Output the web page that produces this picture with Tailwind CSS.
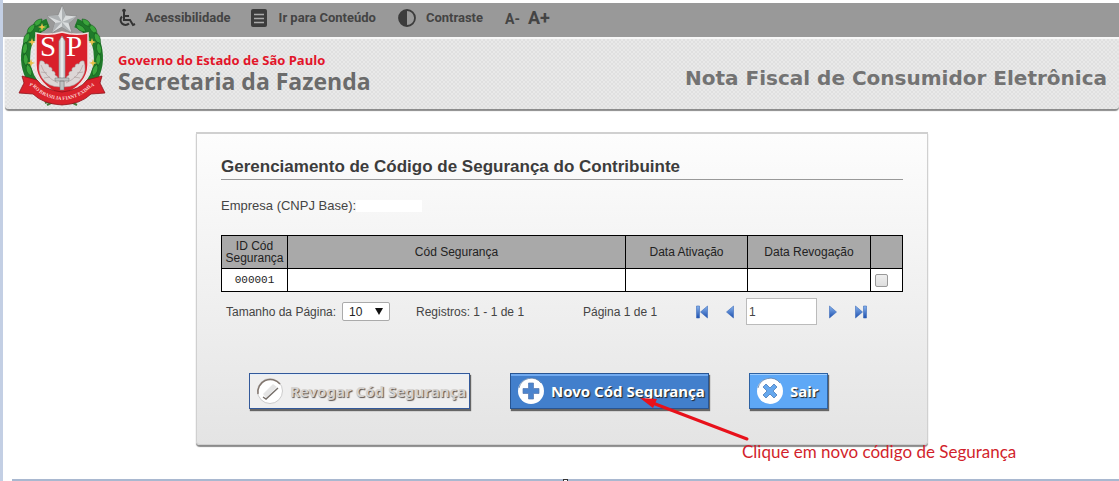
<!DOCTYPE html>
<html lang="pt-BR">
<head>
    <meta charset="UTF-8">
    <meta name="viewport" content="width=device-width, initial-scale=1.0">
    <title>Nota Fiscal de Consumidor Eletrônica</title>
    <script src="https://cdn.jsdelivr.net/npm/@tailwindcss/browser@4"></script>
</head>
<body class="min-h-screen flex flex-col bg-white border-l-3 border-[#c3cfe4] font-['Liberation_Sans',sans-serif] text-xs text-[#444]">
    <header class="relative pt-[3px]">
        <!-- Accessibility bar -->
        <nav class="flex items-center h-[34px] pb-1 pl-[114px] bg-[#999] font-['Roboto',sans-serif] text-[13px] font-bold text-[#444]">
            <a href="#" class="flex items-center gap-2">
                <svg class="w-5 h-5" viewBox="0 0 20 20" fill="none" stroke="#333" stroke-width="2">
                    <circle cx="7" cy="2.500" r="1.800" fill="#333" stroke="none"/>
                    <path d="M7 4v8h6l3 5 2-1M7 8h5"/>
                    <path d="M5 8.500a4.800 4.800 0 1 0 7 7"/>
                </svg>
                Acessibilidade
            </a>
            <a href="#" class="flex items-center gap-3 ml-5">
                <svg class="w-4 h-[18px]" viewBox="0 0 16 18">
                    <rect width="16" height="18" rx="2" fill="#3c3c3c"/>
                    <path d="M3 5.500h10M3 9.500h10M3 13.500h10" stroke="#aaa" stroke-width="1.500"/>
                </svg>
                Ir para Conteúdo
            </a>
            <a href="#" class="flex items-center gap-[10px] ml-[22px]">
                <svg class="w-[18px] h-[18px]" viewBox="0 0 18 18">
                    <circle cx="9" cy="9" r="8" fill="none" stroke="#3c3c3c" stroke-width="1.800"/>
                    <path d="M9 1a8 8 0 0 0 0 16z" fill="#3c3c3c"/>
                </svg>
                Contraste
            </a>
            <div class="flex items-baseline gap-2 ml-[22px]">
                <button type="button" aria-label="Diminuir fonte" class="text-sm leading-5">A-</button>
                <button type="button" aria-label="Aumentar fonte" class="text-lg leading-5">A+</button>
            </div>
        </nav>

        <div class="flex items-center justify-between h-[72px] ml-[2px] pl-[113px] pr-3 rounded-b-sm bg-[#e4e4e4] border-t-2 border-[#f6f6f6] bg-[repeating-conic-gradient(#e0e0e0_0_25%,#e9e9e9_0_50%)] bg-size-[4px_4px] shadow-[0_2px_1px_#8b8b8b]">
            <div class="pb-[2px] font-['Open_Sans',sans-serif] font-bold">
                <p class="text-[13px] leading-4 text-[#e2152a]">Governo do Estado de São Paulo</p>
                <p class="text-[23px] leading-[26px] text-[#6b6b6b]">Secretaria da Fazenda</p>
            </div>
            <h1 class="pt-2 font-['DejaVu_Sans',sans-serif] text-xl font-bold text-[#737373]">Nota Fiscal de Consumidor Eletrônica</h1>
        </div>

        <!-- Coat of arms, hangs over both bars -->
        <svg class="absolute left-[15px] top-[5px] w-[88px] h-[101px]" viewBox="0 0 88 101" role="img" aria-label="Brasão do Estado de São Paulo">
            <path d="M27 98l15-7 15 7M29 100l8-4M59 100l-8-4" stroke="#44783a" stroke-width="2" fill="none"/>
            <g fill="none" stroke="#1f7a2b" stroke-width="9">
                <path d="M30 18C4 28 2 60 17 80"/>
                <path d="M58 18c26 10 28 42 13 62"/>
            </g>
            <g fill="#3ba53c" stroke="#12591c" stroke-width=".6">
                <path d="M24 14q-7 0-9 7 8 1 9-7z"/>
                <path d="M17 19q-8 2-8 10 8-2 8-10zM11 27q-7 4-5 12 8-4 5-12zM8 37q-6 6-2 13 6-6 2-13zM7 48q-4 7 1 13 5-7-1-13zM9 59q-3 8 4 12 3-7-4-12zM30 19q-8 1-10 8 9 0 10-8zM23 27q-7 2-8 9 8-1 8-9z"/>
                <path d="M64 14q7 0 9 7-8 1-9-7zM71 19q8 2 8 10-8-2-8-10zM77 27q7 4 5 12-8-4-5-12zM80 37q6 6 2 13-6-6-2-13zM81 48q4 7-1 13-5-7 1-13zM79 59q3 8-4 12-3-7 4-12zM58 19q8 1 10 8-9 0-10-8zM65 27q7 2 8 9-8-1-8-9z"/>
            </g>
            <path d="M14 33l1 3 3 1-3 1-1 3-1-3-3-1 3-1zM13 54l1 3 3 1-3 1-1 3-1-3-3-1 3-1zM74 33l1 3 3 1-3 1-1 3-1-3-3-1 3-1zM75 54l1 3 3 1-3 1-1 3-1-3-3-1 3-1zM24 18l1 3 3 1-3 1-1 3-1-3-3-1 3-1z" fill="#e9c04a"/>
            <path d="M18 28q13 3 26-1 13 4 26 1v32q0 19-26 31-26-12-26-31z" fill="#d9202b" stroke="#f3dede" stroke-width="1.500"/>
            <!-- Branches beside the sword -->
            <g fill="#dcd6d6" stroke="#9c8d8d" stroke-width=".5">
                <path d="M22 56q4-1 5 3 4-1 4 3 4 0 3 4 4 0 3 4 3 1 3 4l2 2v6q-12 0-18-9-5-8-2-17z"/>
                <path d="M66 56q-4-1-5 3-4-1-4 3-4 0-3 4-4 0-3 4-3 1-3 4l-2 2v6q12 0 18-9 5-8 2-17z"/>
                <path d="M23 60q4 12 17 18M65 60q-4 12-17 18M23 67l6 1M26 73l6-1M65 67l-6 1M62 73l-6-1" fill="none"/>
            </g>
            <path d="M44 31l3 5v37h-6V36z" fill="#d0d3d4" stroke="#8f9496" stroke-width=".7"/>
            <path d="M44 33v40" stroke="#fff"/>
            <path d="M37 73h14v3H37zM42 76h4v9h-4z" fill="#bfc2c2" stroke="#777" stroke-width=".5"/>
            <g fill="#fff" font-family="Liberation Serif, serif" font-size="29">
                <text x="22" y="51">S</text>
                <text x="48" y="51">P</text>
            </g>
            <path d="M4 71l15 4q7 10 25 12 18-2 25-12l15-4-2 7 5 10-14 1q-10 10-29 11-19-1-29-11l-14-1 5-10z" fill="#da222c" stroke="#8e1119" stroke-width=".8"/>
            <path id="motto" d="M6 79l9 3q11 12 29 13 18-1 29-13l9-3" fill="none"/>
            <text font-family="Liberation Serif, serif" font-size="5" font-weight="bold" fill="#fbd5d5" text-anchor="middle"><textPath href="#motto" startOffset="50%">PRO BRASILIA FIANT EXIMIA</textPath></text>
            <path d="M44 0l4 10 11 1-8 7 3 10-10-6-10 6 3-10-8-7 11-1z" fill="#d9dcdd" stroke="#888" stroke-width=".8"/>
            <path d="M44 1v16l4-7zM59 11l-15 6 7 1zM54 28L44 17v5zM34 28l10-11-7 1zM29 11l15 6-4-7z" fill="#aeb2b4"/>
        </svg>
    </header>

    <div class="pl-[2px]">
        <main class="w-full max-w-[732px] mx-auto mt-[23px] px-6 pt-[21px] pb-[35px] border border-[#d0d0d0] border-t-2 rounded-b-sm bg-linear-to-b from-[#fdfdfd] to-[#e4e4e4] shadow-[0_2px_1px_#8b8b8b]">
            <h2 class="border-b border-[#999] text-[17px] leading-6 font-bold text-[#3c3c3c]">Gerenciamento de Código de Segurança do Contribuinte</h2>

            <p class="flex items-center mt-[18px] text-[13px] leading-4">
                Empresa (CNPJ Base):
                <span class="w-[66px] h-3 bg-white"></span>
            </p>

            <table class="w-full mt-[21px] table-fixed border-collapse text-xs leading-3 text-[#222]">
                <colgroup>
                    <col class="w-[66px]">
                    <col>
                    <col class="w-[122px]">
                    <col class="w-[123px]">
                    <col class="w-8">
                </colgroup>
                <thead>
                    <tr class="h-[33px] bg-[#a9a9a9]">
                        <th class="border border-black font-normal">ID Cód Segurança</th>
                        <th class="border border-black font-normal">Cód Segurança</th>
                        <th class="border border-black font-normal">Data Ativação</th>
                        <th class="border border-black font-normal">Data Revogação</th>
                        <th class="border border-black"></th>
                    </tr>
                </thead>
                <tbody>
                    <tr class="h-[23px] bg-white">
                        <td class="border border-black text-center font-['Liberation_Mono',monospace] text-[11px]">000001</td>
                        <td class="border border-black"></td>
                        <td class="border border-black"></td>
                        <td class="border border-black"></td>
                        <td class="border border-black pl-1">
                            <input type="checkbox" aria-label="Selecionar 000001" class="block w-[13px] h-[13px] appearance-none rounded-xs border border-[#999] bg-linear-to-b from-[#eee] to-[#ddd]">
                        </td>
                    </tr>
                </tbody>
            </table>

            <div class="flex items-center mt-[6px] pl-[5px]">
                <label for="page-size" class="w-[116px]">Tamanho da Página:</label>
                <div class="relative">
                    <select id="page-size" class="block w-12 h-[19px] pl-[6px] appearance-none rounded-xs border border-[#aaa] bg-white text-xs leading-4 text-[#222]">
                        <option>10</option>
                    </select>
                    <svg class="absolute right-[7px] top-[6px] w-2 h-[7px] pointer-events-none" viewBox="0 0 8 7"><path d="M0 0h8L4 7z" fill="#111"/></svg>
                </div>
                <span class="w-[167px] pl-[26px]">Registros: 1 - 1 de 1</span>
                <span class="w-[139px] pl-[26px]">Página 1 de 1</span>
                <svg class="w-0 h-0">
                    <linearGradient id="arrow" x2="0" y2="1">
                        <stop stop-color="#88b4ee"/>
                        <stop offset="1" stop-color="#1d4fae"/>
                    </linearGradient>
                </svg>
                <button type="button" aria-label="Primeira página">
                    <svg class="w-3 h-[14px]" viewBox="0 0 12 14" fill="url(#arrow)" stroke="#3d6cba" stroke-width=".6"><path d="M.5 1h3v12h-3zM11.500 1v12L4.500 7z"/></svg>
                </button>
                <button type="button" aria-label="Página anterior" class="ml-[18px]">
                    <svg class="w-2 h-[14px]" viewBox="0 0 8 14" fill="url(#arrow)" stroke="#3d6cba" stroke-width=".6"><path d="M7.500 1v12L.5 7z"/></svg>
                </button>
                <input type="text" value="1" aria-label="Página" class="w-[71px] h-[27px] ml-3 px-[2px] border border-[#bbb] bg-white">
                <button type="button" aria-label="Próxima página" class="ml-3">
                    <svg class="w-2 h-[14px]" viewBox="0 0 8 14" fill="url(#arrow)" stroke="#3d6cba" stroke-width=".6"><path d="M.5 1v12l7-6z"/></svg>
                </button>
                <button type="button" aria-label="Última página" class="ml-[18px]">
                    <svg class="w-3 h-[14px]" viewBox="0 0 12 14" fill="url(#arrow)" stroke="#3d6cba" stroke-width=".6"><path d="M8.500 1h3v12h-3zM.5 1v12l7-6z"/></svg>
                </button>
            </div>

            <div class="flex gap-10 mt-12 pl-7 font-['Noto_Sans',sans-serif] text-[15px] font-bold">
                <button type="button" disabled class="flex items-center gap-[6px] w-[221px] h-9 px-[6px] border border-[#33599a] bg-[#efefef] text-[#d4d2d0] text-shadow-[1px_1px_1px_#5d5550] shadow-[inset_0_1px_#e3eefb,1px_2px_1px_#666] whitespace-nowrap">
                    <svg class="w-7 h-7 shrink-0" viewBox="0 0 28 28">
                        <circle cx="14" cy="14" r="12.500" fill="#fff" stroke="#ccc"/>
                        <path d="M2 17A12.500 12.500 0 0 1 24 7" fill="none" stroke="#81756d" stroke-width="1.500"/>
                        <path d="M7 17l10-10 4 3-11 11z" fill="#e5e5e5"/>
                        <path d="M7 20l3 2 12-11" fill="none" stroke="#756e69" stroke-width="1.400"/>
                    </svg>
                    Revogar Cód Segurança
                </button>

                <div class="relative">
                    <button type="button" class="flex items-center gap-[6px] w-[199px] h-9 px-[6px] border border-[#285593] bg-[#427fcc] text-white text-shadow-[1px_1px_1px_#222] shadow-[inset_0_2px_#71aaf0,1px_2px_1px_#666] whitespace-nowrap">
                        <svg class="w-7 h-7 shrink-0" viewBox="0 0 28 28">
                            <circle cx="14" cy="14" r="13" fill="#fff"/>
                            <path d="M2 11A12.500 12.500 0 0 1 24 6" fill="none" stroke="#4a6d99" stroke-width=".7"/>
                            <path d="M11.500 6h5v5.500H22v5h-5.500V22h-5v-5.500H6v-5h5.500z" fill="#4c84cd" stroke="#5479b0" stroke-width=".7"/>
                        </svg>
                        Novo Cód Segurança
                    </button>
                    <!-- Callout -->
                    <svg class="absolute left-[130px] top-6 w-[110px] h-[46px] pointer-events-none" viewBox="0 0 110 46">
                        <path d="M10 5l97 37" stroke="#e8111b" stroke-width="3" stroke-linecap="round"/>
                        <path d="M0 1l17 1-4 9z" fill="#e8111b"/>
                    </svg>
                    <p class="absolute left-[232px] top-[69px] font-['Lato',sans-serif] text-[17px] leading-5 font-normal text-[#d21f2c] whitespace-nowrap">Clique em novo código de Segurança</p>
                </div>

                <button type="button" class="flex items-center gap-[6px] w-[79px] h-9 px-[6px] border border-[#2d62a3] bg-[#5ea8f6] text-white text-shadow-[1px_1px_1px_#222] shadow-[inset_0_1px_#a3d0ff,1px_2px_1px_#666]">
                    <svg class="w-7 h-7 shrink-0" viewBox="0 0 28 28">
                        <circle cx="14" cy="14" r="13" fill="#fff"/>
                        <path d="M2 11A12.500 12.500 0 0 1 24 6" fill="none" stroke="#4a6d99" stroke-width=".7"/>
                        <path d="M10 7l4 4 4-4 3 3-4 4 4 4-3 3-4-4-4 4-3-3 4-4-4-4z" fill="#66a8ee" stroke="#4c7cb8" stroke-width=".8" stroke-linejoin="round"/>
                    </svg>
                    Sair
                </button>
            </div>
        </main>
    </div>

    <footer class="flex justify-center mt-auto ml-[9px] h-[2px] bg-[#a9b8d0]">
        <span class="w-[5px] h-[2px] border border-b-0 border-[#333] bg-white"></span>
    </footer>
</body>
</html>
